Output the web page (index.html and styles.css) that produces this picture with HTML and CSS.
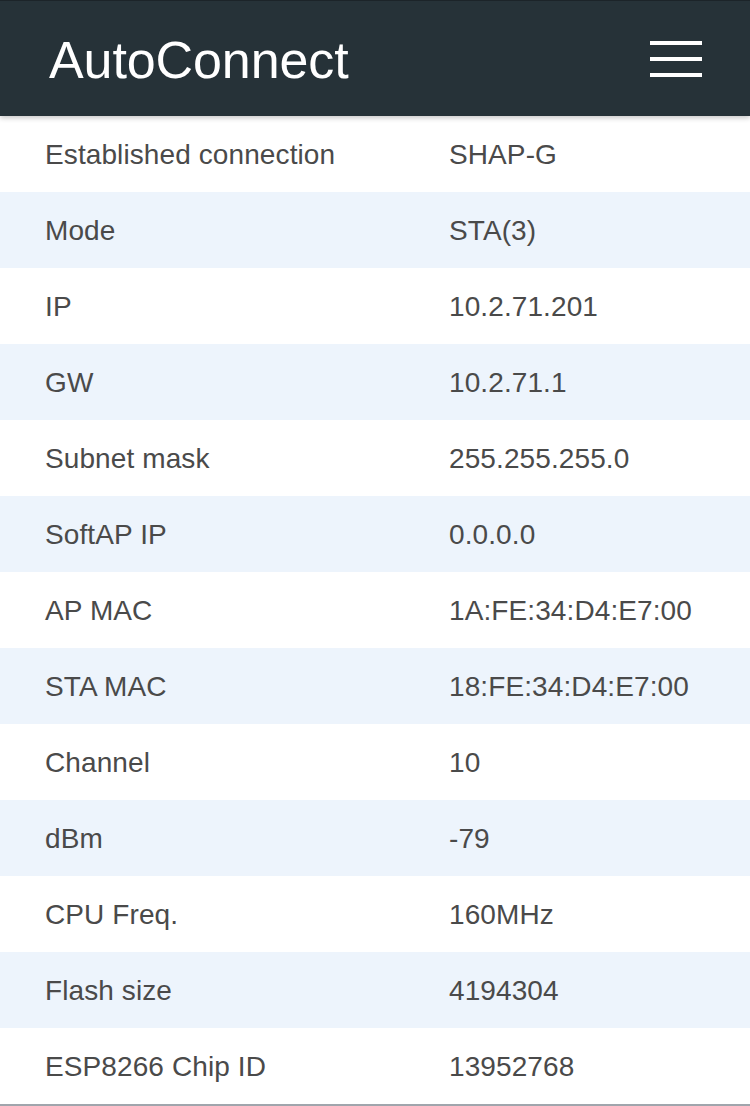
FILE: index.html
```html
<!DOCTYPE html>
<html lang="en">
<head>
<meta charset="utf-8">
<title>AutoConnect</title>
<link rel="stylesheet" href="styles.css">
</head>
<body>
<header class="topbar">
  <h1 class="title">AutoConnect</h1>
  <div class="menu" aria-label="menu">
    <span class="bar"></span>
    <span class="bar"></span>
    <span class="bar"></span>
  </div>
</header>
<main class="info">
  <div class="row"><div class="key">Established connection</div><div class="val">SHAP-G</div></div>
  <div class="row"><div class="key">Mode</div><div class="val">STA(3)</div></div>
  <div class="row"><div class="key">IP</div><div class="val">10.2.71.201</div></div>
  <div class="row"><div class="key">GW</div><div class="val">10.2.71.1</div></div>
  <div class="row"><div class="key">Subnet mask</div><div class="val">255.255.255.0</div></div>
  <div class="row"><div class="key">SoftAP IP</div><div class="val">0.0.0.0</div></div>
  <div class="row"><div class="key">AP MAC</div><div class="val">1A:FE:34:D4:E7:00</div></div>
  <div class="row"><div class="key">STA MAC</div><div class="val">18:FE:34:D4:E7:00</div></div>
  <div class="row"><div class="key">Channel</div><div class="val">10</div></div>
  <div class="row"><div class="key">dBm</div><div class="val">-79</div></div>
  <div class="row"><div class="key">CPU Freq.</div><div class="val">160MHz</div></div>
  <div class="row"><div class="key">Flash size</div><div class="val">4194304</div></div>
  <div class="row"><div class="key">ESP8266 Chip ID</div><div class="val">13952768</div></div>
</main>
</body>
</html>
```
FILE: styles.css
```css
html, body {
  margin: 0;
  padding: 0;
  background: #ffffff;
  font-family: "Liberation Sans", Arial, sans-serif;
}

.topbar {
  position: relative;
  z-index: 2;
  height: 116px;
  box-sizing: border-box;
  background: #263238;
  border-top: 1px solid #1c2429;
  display: flex;
  align-items: center;
  justify-content: space-between;
  padding: 0 48px 0 49px;
  box-shadow: 0 2px 5px rgba(0, 0, 0, 0.22);
}

.title {
  margin: 0;
  color: #ffffff;
  font-weight: normal;
  font-size: 52px;
  line-height: 1;
  letter-spacing: -0.1px;
  padding-top: 2px;
}

.menu {
  display: flex;
  flex-direction: column;
  gap: 12px;
  width: 52px;
  margin-top: 1px;
}

.bar {
  display: block;
  height: 4px;
  background: #ffffff;
}

.info {
  display: flex;
  flex-direction: column;
  border-bottom: 2px solid #a0a5ac;
}

.row {
  display: grid;
  grid-template-columns: 404px 1fr;
  height: 76px;
  box-sizing: border-box;
  align-items: center;
  padding: 2px 0 0 45px;
  font-size: 28px;
  letter-spacing: 0.1px;
  color: #4a4a4a;
}

.row:nth-child(even) {
  background: #edf4fc;
}

.key, .val {
  white-space: nowrap;
}
```
